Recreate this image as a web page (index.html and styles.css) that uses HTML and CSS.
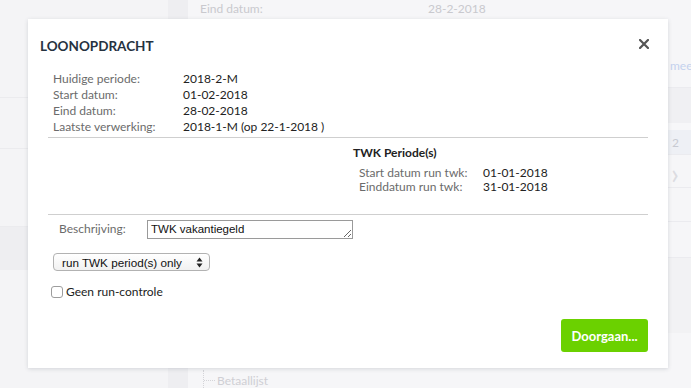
FILE: index.html
```html
<!DOCTYPE html>
<html lang="nl">
<head>
  <meta charset="UTF-8">
  <title>Loonopdracht</title>
  <link rel="stylesheet" href="styles.css">
</head>
<body>
  <div class="app">
    <aside class="sidebar">
      <div class="side-block s1"></div>
      <div class="side-block s2"></div>
      <div class="side-block s3"></div>
      <div class="side-block s4"></div>
      <div class="side-block s5"></div>
    </aside>
    <div class="gutter"></div>
    <main class="content">
      <div class="bg-row top-row">
        <span class="bg-label">Eind datum:</span>
        <span class="bg-value">28-2-2018</span>
      </div>
      <div class="bg-row more-row"><span class="more">meer</span></div>
      <div class="bg-row r1"></div>
      <div class="bg-row r2"></div>
      <div class="bg-row r3"><span class="page-num">2</span></div>
      <div class="bg-row r4"></div>
      <div class="bg-row r5"><span class="chev">&rsaquo;</span></div>
      <div class="bg-row r6"></div>
      <div class="bg-row r7"></div>
      <div class="bg-row r8"></div>
      <div class="bg-row r9"></div>
      <div class="bg-row tree-row"><span class="tree-line"></span>Betaallijst</div>
    </main>
  </div>

  <div class="modal">
    <div class="modal-header">
      <h2>LOONOPDRACHT</h2>
      <span class="close">
        <svg width="10" height="10" viewBox="0 0 10 10"><path d="M1 1L9 9M9 1L1 9" stroke="#555" stroke-width="2.2" stroke-linecap="square"/></svg>
      </span>
    </div>
    <div class="modal-body">
      <div class="info">
        <span class="lbl">Huidige periode:</span><span class="val">2018-2-M</span>
        <span class="lbl">Start datum:</span><span class="val">01-02-2018</span>
        <span class="lbl">Eind datum:</span><span class="val">28-02-2018</span>
        <span class="lbl">Laatste verwerking:</span><span class="val">2018-1-M (op 22-1-2018 )</span>
      </div>
      <div class="line"></div>
      <div class="twk">
        <h3>TWK Periode(s)</h3>
        <div class="twk-rows">
          <span class="lbl">Start datum run twk:</span><span class="val">01-01-2018</span>
          <span class="lbl">Einddatum run twk:</span><span class="val">31-01-2018</span>
        </div>
      </div>
      <div class="line"></div>
      <div class="desc-row">
        <label class="desc-label" for="desc">Beschrijving:</label>
        <textarea id="desc" rows="1">TWK vakantiegeld</textarea>
      </div>
      <div class="select-wrap">
        <select>
          <option>run TWK period(s) only</option>
        </select>
        <svg class="select-arrows" width="7" height="11" viewBox="0 0 7 11"><path d="M3.5 0.5L6.5 4.5H0.5Z M3.5 10.5L6.5 6.5H0.5Z" fill="#222"/></svg>
      </div>
      <label class="check-row"><input type="checkbox"> Geen run-controle</label>
      <div class="actions">
        <button class="btn-go">Doorgaan...</button>
      </div>
    </div>
  </div>
</body>
</html>
```

FILE: styles.css
```css
body {
  margin: 0;
  font-family: Lato, "Open Sans", sans-serif;
  background: #f5f5f7;
  color: #222;
  width: 691px;
  height: 388px;
  overflow: hidden;
  position: relative;
}
.app {
  display: flex;
  height: 388px;
}
.sidebar {
  width: 168px;
  flex-shrink: 0;
  background: #f4f4f6;
}
.side-block {
  border-bottom: 1px solid #ebebee;
}
.s1 { height: 97px; }
.s2 { height: 50px; }
.s3 { height: 77px; }
.s4 { height: 43px; background: #eeeef1; border-bottom: none; }
.s5 { border-bottom: none; }
.gutter {
  width: 20px;
  flex-shrink: 0;
  background: #eeeef1;
}
.content {
  flex: 1;
  min-width: 0;
  overflow: hidden;
  background: #f6f6f8;
}
.bg-row {
  border-bottom: 1px solid #ebebef;
  box-sizing: border-box;
}
.top-row {
  height: 19px;
  display: flex;
  font-size: 12px;
  color: #c9c9ce;
  padding-left: 12px;
  line-height: 18px;
  border-bottom: none;
}
.bg-label { width: 228px; }
.more-row {
  height: 69px;
  padding-left: 482px;
  padding-top: 39px;
  font-size: 12px;
  color: #c4d2ee;
  white-space: nowrap;
}
.r1 { height: 35px; background: #f0f0f3; border-bottom: none; }
.r2 { height: 7px; background: #f7f7f9; border-bottom: none; }
.r3 {
  height: 25px;
  background: #eef0f5;
  padding-left: 484px;
  font-size: 12px;
  color: #c8cad2;
  line-height: 25px;
}
.r4 { height: 7px; border-bottom: none; }
.r5 {
  height: 26px;
  padding-left: 483px;
  font-size: 28px;
  color: #dcdce1;
  line-height: 22px;
}
.r6 { height: 34px; }
.r7 { height: 36px; }
.r8 { height: 75px; background: #f2f2f4; border-bottom: none; }
.r9 { height: 37px; border-bottom: none; }
.tree-row {
  border-bottom: none;
  padding-left: 15px;
  font-size: 12px;
  color: #cfcfd4;
  display: flex;
  align-items: center;
  height: 20px;
}
.tree-line {
  width: 12px;
  height: 20px;
  border-left: 1px dotted #d4d4d8;
  margin-right: 2px;
  box-sizing: border-box;
  background: linear-gradient(to right, #d4d4d8 50%, transparent 50%) 0 10px / 2px 1px repeat-x;
}

.modal {
  position: absolute;
  left: 28px;
  top: 19px;
  width: 640px;
  height: 349px;
  background: #fff;
  box-shadow: 0 1px 4px rgba(60, 70, 90, 0.18);
}
.modal-header {
  display: flex;
  justify-content: space-between;
  align-items: center;
  padding: 17px 19px 0 12px;
  height: 20px;
}
.modal-header h2 {
  margin: 0;
  font-size: 13.5px;
  font-weight: bold;
  color: #26323f;
}
.close {
  display: flex;
  margin-top: -4px;
}
.modal-body {
  padding: 15px 20px 0 20px;
}
.info {
  display: grid;
  grid-template-columns: 130px auto;
  padding-left: 5px;
  font-size: 12px;
  line-height: 16px;
}
.lbl { color: #6b6b6b; }
.val { color: #222; }
.line {
  border-top: 1px solid #cfcfcf;
  margin-top: 2px;
}
.twk {
  padding: 7px 0 18px 305px;
  font-size: 12px;
}
.twk h3 {
  margin: 0 0 5px 0;
  font-size: 12px;
  font-weight: bold;
  line-height: 16px;
}
.twk-rows {
  display: grid;
  grid-template-columns: 124px auto;
  padding-left: 6px;
  line-height: 14px;
}
.desc-row {
  display: flex;
  align-items: center;
  margin-top: 5px;
}
.desc-label {
  width: 88px;
  padding-left: 11px;
  font-size: 12px;
  color: #6b6b6b;
  margin-top: -2px;
}
textarea {
  width: 206px;
  height: 19px;
  box-sizing: border-box;
  border: 1px solid #9a9a9a;
  font-family: "Liberation Sans", Arial, sans-serif;
  font-size: 11.5px;
  padding: 2px 3px;
  line-height: 13px;
  color: #111;
  overflow: hidden;
}
.select-wrap {
  position: relative;
  width: 157px;
  margin: 14px 0 0 5px;
}
select {
  appearance: none;
  -webkit-appearance: none;
  width: 157px;
  height: 18px;
  border: 1px solid #b2b2b2;
  border-radius: 4px;
  background: linear-gradient(#ffffff, #f1f1f1);
  font-family: "Liberation Sans", Arial, sans-serif;
  font-size: 11.7px;
  padding: 0 0 0 8px;
  color: #111;
  display: block;
}
.select-arrows {
  position: absolute;
  right: 7px;
  top: 4px;
}
.check-row {
  display: flex;
  align-items: center;
  margin: 13px 0 0 3px;
  font-size: 12px;
  line-height: 16px;
  color: #222;
}
.check-row input {
  appearance: none;
  -webkit-appearance: none;
  width: 12px;
  height: 12px;
  margin: 0 3px 0 0;
  border: 1px solid #9d9d9d;
  border-radius: 3px;
  background: #fff;
}
.actions {
  display: flex;
  justify-content: flex-end;
  margin-top: 19px;
}
.btn-go {
  width: 87px;
  height: 33px;
  background: #6bd100;
  color: #fff;
  border: none;
  border-radius: 3px;
  font-family: Lato, sans-serif;
  font-weight: bold;
  font-size: 13px;
  padding: 0;
}
```
